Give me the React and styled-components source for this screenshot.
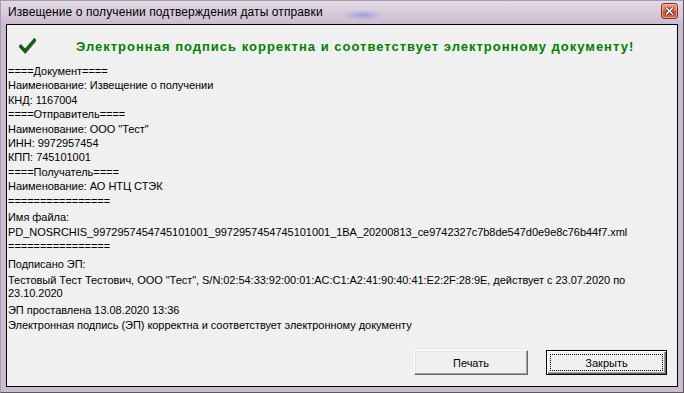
import React from 'react';
import styled, { createGlobalStyle } from 'styled-components';

const GlobalStyle = createGlobalStyle`
  html, body {
    margin: 0;
    padding: 0;
    background: #ffffff;
  }
  body {
    font-family: "Liberation Sans", Arial, sans-serif;
  }
`;

const Window = styled.div`
  width: 684px;
  height: 393px;
  box-sizing: border-box;
  border: 1px solid #5f5766;
  border-left-color: #a99cae;
  border-top-color: #a99cae;
  background: #cbbccf;
  display: flex;
  flex-direction: column;
`;

const TitleBar = styled.div`
  height: 23px;
  flex: none;
  display: flex;
  align-items: center;
  justify-content: space-between;
  padding: 0 5px 0 7px;
  background:
    radial-gradient(ellipse 22px 5px at 362px 14px, rgba(90, 110, 225, 0.45), rgba(90, 110, 225, 0) 100%),
    linear-gradient(180deg, #e2d9e4 0%, #d6cada 55%, #cbbccf 100%);
`;

const Title = styled.span`
  font-size: 12px;
  color: #000;
  letter-spacing: 0.1px;
  padding-bottom: 1px;
`;

const CloseButton = styled.div`
  width: 17px;
  height: 16px;
  box-sizing: border-box;
  margin-top: -3px;
  border: 1px solid #7b3327;
  border-radius: 3px;
  background: linear-gradient(180deg, #eba08c 0%, #dc7358 45%, #c84a2e 55%, #d5694c 100%);
  box-shadow: inset 0 0 0 1px rgba(255, 210, 195, 0.55);
  display: flex;
  align-items: center;
  justify-content: center;
`;

const Client = styled.div`
  flex: 1;
  margin: 0 5px 5px 5px;
  border: 1px solid #000;
  background: #f0f0f0;
  display: flex;
  flex-direction: column;
  min-height: 0;
`;

const Header = styled.div`
  height: 30px;
  margin-top: 6px;
  display: flex;
  align-items: center;
  padding-left: 12px;
  gap: 40px;
`;

const Verdict = styled.span`
  font-size: 13px;
  font-weight: bold;
  color: #008000;
  letter-spacing: 1px;
  white-space: nowrap;
`;

const Body = styled.div`
  padding: 3px 0 0 1px;
  font-size: 11px;
  letter-spacing: -0.04px;
  color: #000;
`;

const Line = styled.div`
  height: ${p => p.$h || 14.4}px;
  line-height: ${p => p.$h || 14.4}px;
  margin-top: ${p => p.$gap || 0}px;
  white-space: nowrap;
`;

const Footer = styled.div`
  margin-top: auto;
  display: flex;
  justify-content: flex-end;
  gap: 18px;
  padding: 0 10px 11px 0;
`;

const Button = styled.div`
  position: relative;
  width: ${p => p.$w}px;
  height: 25px;
  box-sizing: border-box;
  display: flex;
  align-items: center;
  justify-content: center;
  font-size: 11px;
  color: #000;
  background: #f0f0f0;
  border: 1px solid;
  border-color: ${p => (p.$default ? '#000' : '#fff #696969 #696969 #fff')};
  box-shadow: ${p =>
    p.$default
      ? 'inset 1px 1px #fff, inset -1px -1px #696969, inset -2px -2px #a0a0a0'
      : 'inset -1px -1px #a0a0a0, inset 1px 1px #e3e3e3'};

  &::after {
    content: '';
    display: ${p => (p.$default ? 'block' : 'none')};
    position: absolute;
    inset: 3px;
    border: 1px dotted #000;
  }
`;

const Check = () => (
  <svg width="17" height="16" viewBox="0 0 17 16">
    <path
      d="M1.8 8.6 L6.2 13.2 L15.4 2.4"
      fill="none"
      stroke="#1d5a1d"
      strokeWidth="3.6"
      strokeLinecap="square"
      strokeLinejoin="miter"
    />
  </svg>
);

const CloseGlyph = () => (
  <svg width="9" height="8" viewBox="0 0 9 8">
    <path d="M1.5 1 L7.5 7 M7.5 1 L1.5 7" stroke="#4a1a12" strokeWidth="3" strokeLinecap="square" />
    <path d="M1.5 1 L7.5 7 M7.5 1 L1.5 7" stroke="#ffffff" strokeWidth="1.6" strokeLinecap="square" />
  </svg>
);

const lines = [
  { text: '====Документ====' },
  { text: 'Наименование: Извещение о получении' },
  { text: 'КНД: 1167004' },
  { text: '====Отправитель====' },
  { text: 'Наименование: ООО "Тест"' },
  { text: 'ИНН: 9972957454' },
  { text: 'КПП: 745101001' },
  { text: '====Получатель====' },
  { text: 'Наименование: АО НТЦ СТЭК' },
  { text: '================' },
  { text: 'Имя файла:', gap: 2.5 },
  {
    text:
      'PD_NOSRCHIS_9972957454745101001_9972957454745101001_1BA_20200813_ce9742327c7b8de547d0e9e8c76b44f7.xml'
  },
  { text: '================' },
  { text: 'Подписано ЭП:', gap: 3.5 },
  {
    text:
      'Тестовый Тест Тестович, ООО "Тест", S/N:02:54:33:92:00:01:AC:C1:A2:41:90:40:41:E2:2F:28:9E, действует с 23.07.2020 по',
    gap: 2.5,
    h: 13
  },
  { text: '23.10.2020', h: 13 },
  { text: 'ЭП проставлена 13.08.2020 13:36', gap: 3 },
  { text: 'Электронная подпись (ЭП) корректна и соответствует электронному документу', gap: 0.5 }
];

export default function App() {
  return (
    <>
      <GlobalStyle />
      <Window>
        <TitleBar>
          <Title>Извещение о получении подтверждения даты отправки</Title>
          <CloseButton>
            <CloseGlyph />
          </CloseButton>
        </TitleBar>
        <Client>
          <Header>
            <Check />
            <Verdict>Электронная подпись корректна и соответствует электронному документу!</Verdict>
          </Header>
          <Body>
            {lines.map((l, i) => (
              <Line key={i} $gap={l.gap} $h={l.h}>
                {l.text}
              </Line>
            ))}
          </Body>
          <Footer>
            <Button $w={114}>Печать</Button>
            <Button $w={121} $default>
              Закрыть
            </Button>
          </Footer>
        </Client>
      </Window>
    </>
  );
}
